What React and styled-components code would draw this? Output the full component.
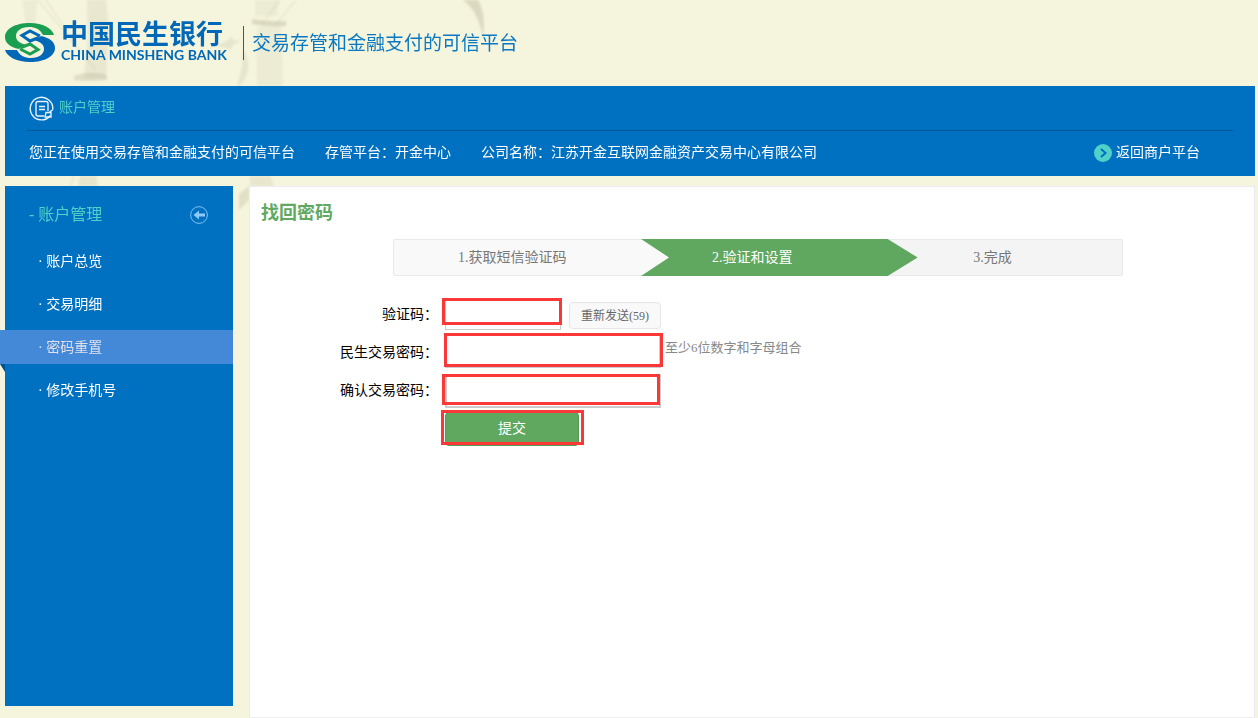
import React, { useState } from "react";
import styled, { createGlobalStyle } from "styled-components";

const GlobalStyle = createGlobalStyle`
  * {
    box-sizing: border-box;
  }
  body {
    margin: 0;
    background-color: #f5f4dc;
    color: #000;
    font-family: "Liberation Serif", "Noto Sans CJK SC", sans-serif;
    font-size: 14px;
  }
  button,
  input {
    font-family: inherit;
  }
  a {
    color: inherit;
    text-decoration: none;
  }
`;

const Page = styled.div`
  position: relative;
  padding: 0 3px 0 5px;
`;

const Bamboo = styled.svg`
  position: absolute;
  top: 0;
  left: 0;
  z-index: -1;
  g {
    filter: blur(1px);
  }
`;

const Header = styled.header`
  display: flex;
  align-items: center;
  height: 86px;
`;

const Brand = styled.a`
  display: flex;
  align-items: center;
  gap: 6px;
  color: #0068b7;
  svg {
    display: block;
  }
`;

const BrandName = styled.span`
  display: flex;
  flex-direction: column;
  width: 170px;
  white-space: nowrap;
  strong {
    font: 700 27px/24px "Noto Sans CJK SC", sans-serif;
  }
  span {
    font: 700 14px/20px Lato, sans-serif;
  }
`;

const Slogan = styled.p`
  margin: 0 0 0 12px;
  padding: 0 0 2px 8px;
  border-left: 1px solid #0068b7;
  color: #0b78c2;
  font: 400 19px/32px "Noto Sans CJK SC", sans-serif;
`;

const Banner = styled.section`
  height: 90px;
  padding: 0 22px;
  background-color: #0070c1;
  color: #fff;
`;

const BannerTitle = styled.h1`
  display: flex;
  align-items: center;
  gap: 5px;
  height: 45px;
  margin: 0;
  padding-left: 2px;
  border-bottom: 1px solid #00559a;
  color: #4fd0c8;
  font-size: 14px;
  font-weight: 400;
  span {
    padding-bottom: 4px;
  }
`;

const BannerInfo = styled.div`
  display: flex;
  align-items: center;
  gap: 30px;
  height: 44px;
  padding: 0 33px 0 2px;
  a {
    display: flex;
    align-items: center;
    gap: 4px;
    margin-left: auto;
  }
  span {
    padding-bottom: 4px;
  }
`;

const Body = styled.div`
  display: flex;
  align-items: flex-start;
  gap: 16px;
  margin-top: 10px;
`;

const Sidebar = styled.nav`
  flex: 0 0 228px;
  min-height: 520px;
  background-color: #0070c1;
  color: #fff;
`;

const SidebarHead = styled.div`
  display: flex;
  align-items: center;
  justify-content: space-between;
  height: 58px;
  padding: 0 25px 0 24px;
  color: #4fd0c8;
  font-size: 16px;
  span {
    padding-bottom: 4px;
  }
  button {
    width: 18px;
    height: 18px;
    padding: 0;
    border: 0;
    background: none;
    cursor: pointer;
  }
  svg {
    display: block;
  }
`;

const Menu = styled.ul`
  display: flex;
  flex-direction: column;
  gap: 9px;
  margin: 0;
  padding: 0;
  list-style: none;
`;

const MenuItem = styled.li`
  position: relative;
  margin-left: -5px;
  background-color: ${(props) => (props.$active ? "#4489d8" : "transparent")};
  color: ${(props) => (props.$active ? "#dfe0ea" : "#fff")};
  line-height: 32px;
  a {
    display: block;
    padding: 2px 0 0 38px;
  }
  &::after {
    content: "";
    display: ${(props) => (props.$active ? "block" : "none")};
    position: absolute;
    top: 100%;
    left: 0;
    border-top: 8px solid #00508c;
    border-left: 5px solid transparent;
  }
`;

const Main = styled.main`
  flex: 1;
  min-height: 532px;
  padding: 12px 0 12px 11px;
  border: 1px solid #ebebf0;
  background-color: #fff;
`;

const Title = styled.h2`
  margin: 0;
  color: #60a960;
  font-size: 18px;
  line-height: 28px;
`;

const Steps = styled.ol`
  display: flex;
  max-width: 730px;
  height: 37px;
  margin: 12px auto 22px;
  padding: 0;
  border: 1px solid #e9e9e9;
  border-radius: 2px;
  background: linear-gradient(90deg, #f9f9f9 50%, #f4f4f4 50%);
  list-style: none;
`;

const Step = styled.li`
  width: ${(props) => props.$width};
  padding-right: ${(props) => props.$inset};
  color: #777;
  line-height: 36px;
  text-align: center;
`;

const CurrentStep = styled(Step)`
  margin: -1px 0;
  background-color: #60a860;
  color: #fff;
  line-height: 38px;
  clip-path: polygon(
    0 0,
    calc(100% - 30px) 0,
    100% 50%,
    calc(100% - 30px) 100%,
    0 100%,
    28px 50%
  );
`;

const Form = styled.form`
  display: flex;
  flex-direction: column;
  gap: 4px;
`;

const Row = styled.div`
  display: flex;
  align-items: flex-start;
  min-height: 34px;
  label {
    width: 177px;
    margin-right: 7px;
    line-height: 34px;
    text-align: right;
  }
`;

const Marked = styled.div`
  position: relative;
  margin-left: ${(props) => (props.$indent ? "184px" : "0")};
  &::after {
    content: "";
    position: absolute;
    inset: ${(props) => props.$inset};
    border: 3px solid #fb3838;
    pointer-events: none;
  }
`;

const Input = styled.input`
  display: block;
  width: ${(props) => props.$width};
  height: ${(props) => props.$height || "32px"};
  padding: 4px 8px;
  border: solid #ccc;
  border-width: ${(props) => (props.$thin ? "0 1px 1px" : "0 2px 2px")};
  background-color: #fff;
  font-size: 14px;
  outline: none;
`;

const ResendButton = styled.button`
  height: 27px;
  margin: 4px 0 0 8px;
  padding: 0 11px 2px;
  border: 1px solid #e6e6e6;
  border-radius: 4px;
  background-color: #f9f9f9;
  color: #666;
  font-size: 12px;
`;

const Hint = styled.span`
  margin-left: 4px;
  color: #888;
  font-size: 13px;
  line-height: 24px;
`;

const SubmitButton = styled.button`
  display: block;
  width: 134px;
  height: 34px;
  padding: 0 0 4px;
  border: 1px solid #559c56;
  border-radius: 4px;
  background-color: #60a860;
  color: #fff;
  font-size: 14px;
  cursor: pointer;
`;

const menus = ["账户总览", "交易明细", "密码重置", "修改手机号"];

const App = () => {
  const [active, setActive] = useState("密码重置");
  const [code, setCode] = useState("");
  const [password, setPassword] = useState("");
  const [confirm, setConfirm] = useState("");

  return (
    <>
      <GlobalStyle />
      <Page>
        <Bamboo width="500" height="260" viewBox="0 0 500 260" aria-hidden="true">
          <g fill="#8c8c6e">
            <path opacity=".08" d="M22 0h15l-2 24H26z" />
            <path opacity=".11" d="M87 0h19l3 28-3 50H84l4-40z" />
            <path opacity=".2" d="M74 76q16-6 33-1v5q-16 2-33 0z" />
            <path opacity=".08" d="M256 0h23l-2 16h-22zM257 27h24l2 59h-26z" />
            <path opacity=".24" d="M252 19q15 3 34 2v5q-17 2-34-2z" />
            <path opacity=".24" d="M463 0q16 12 20 38 3-25-5-38z" />
            <path opacity=".14" d="M243 50q8 12 4 24-4 10-10 12 6-18 6-36z" />
            <path opacity=".14" d="M212 46q14-2 20-10-2 6 10 4-10 4-12 10-6-4-18-4z" />
            <path opacity=".12" d="M80 176h16l2 10H78zM250 176h20l4 10h-24z" />
            <path opacity=".18" d="M239 194l10-8v14l-10 10z" />
          </g>
          <g stroke="#8c8c6e" opacity=".2" fill="none">
            <path d="M38 0l58 70M46 0l28 42M262 24L280 0M276 24L296 0M70 186l4-10" />
          </g>
        </Bamboo>

        <Header>
          <Brand href="#">
            <svg width="50" height="40" viewBox="0 0 50 40" role="img" aria-label="中国民生银行">
              <path
                fill="#1a9f52"
                d="M49 12H38C35 6 30 4 24 4 16 4 11 8 11 13c0 5 4 7 9 8.500L14 26C5 24 0 20 0 14 0 6 10 0 25 0c13 0 22 5 24 12z"
              />
              <path
                fill="#0068b7"
                d="M0 27h12c3 6 8 8 14 8 8 0 13-4 13-9 0-5-4-7-9-8.500L36 13c9 2 14 6 14 12 0 8-10 14-25 14C12 39 2 34 0 27z"
              />
              <path fill="none" stroke="#1a9f52" strokeWidth="3" d="M16 24.500l9-3.500 8 5.500-8 4.500-10-5" />
              <path fill="none" stroke="#0068b7" strokeWidth="3" d="M34 14.500L25 18l-8-5.500L25 8l10 5" />
            </svg>
            <BrandName>
              <strong>中国民生银行</strong>
              <span>CHINA MINSHENG BANK</span>
            </BrandName>
          </Brand>
          <Slogan>交易存管和金融支付的可信平台</Slogan>
        </Header>

        <Banner>
          <BannerTitle>
            <svg width="25" height="25" viewBox="0 0 25 25" fill="none" stroke="#e6f3fb" strokeWidth="1.4">
              <path d="M21.500 19.500A11.300 11.300 0 1 1 23.800 13.500" />
              <path d="M15 20H9a2 2 0 0 1-2-2V7.500a2 2 0 0 1 2-2h8a2 2 0 0 1 2 2V15M10 10.500h6M10 13.500h6" />
              <path d="M16 21h6v-4.500h-5zM20 16.500l4-3" />
            </svg>
            <span>账户管理</span>
          </BannerTitle>
          <BannerInfo>
            <span>您正在使用交易存管和金融支付的可信平台</span>
            <span>存管平台：开金中心</span>
            <span>公司名称：江苏开金互联网金融资产交易中心有限公司</span>
            <a href="#">
              <svg width="18" height="18" viewBox="0 0 18 18">
                <circle cx="9" cy="9" r="9" fill="#4fd0c8" />
                <path d="M7 5l4.500 4L7 13" fill="none" stroke="#0070c1" strokeWidth="2" />
              </svg>
              <span>返回商户平台</span>
            </a>
          </BannerInfo>
        </Banner>

        <Body>
          <Sidebar>
            <SidebarHead>
              <span>- 账户管理</span>
              <button type="button" aria-label="收起">
                <svg width="18" height="18" viewBox="0 0 18 18">
                  <circle cx="9" cy="9" r="8.400" fill="none" stroke="#7fc0f5" />
                  <path d="M3.500 9L9 4.500v3h6v3H9v3z" fill="#8cc8fa" />
                </svg>
              </button>
            </SidebarHead>
            <Menu>
              {menus.map((item) => (
                <MenuItem key={item} $active={item === active}>
                  <a href="#" onClick={() => setActive(item)}>
                    · {item}
                  </a>
                </MenuItem>
              ))}
            </Menu>
          </Sidebar>

          <Main>
            <Title>找回密码</Title>
            <Steps>
              <Step $width="34%" $inset="10px">1.获取短信验证码</Step>
              <CurrentStep $width="38%" $inset="54px">2.验证和设置</CurrentStep>
              <Step $width="28%" $inset="54px">3.完成</Step>
            </Steps>

            <Form onSubmit={(e) => e.preventDefault()}>
              <Row>
                <label htmlFor="code">验证码：</label>
                <Marked $inset="0 -1px 5px -3px">
                  <Input
                    id="code"
                    $width="116px"
                    $thin
                    value={code}
                    onChange={(e) => setCode(e.target.value)}
                  />
                </Marked>
                <ResendButton type="button">重新发送(59)</ResendButton>
              </Row>
              <Row>
                <label htmlFor="password">民生交易密码：</label>
                <Marked $inset="-3px -2px 1px -1px">
                  <Input
                    id="password"
                    type="password"
                    $width="216px"
                    value={password}
                    onChange={(e) => setPassword(e.target.value)}
                  />
                </Marked>
                <Hint>至少6位数字和字母组合</Hint>
              </Row>
              <Row>
                <label htmlFor="confirm">确认交易密码：</label>
                <Marked $inset="0 1px 3px -3px">
                  <Input
                    id="confirm"
                    type="password"
                    $width="216px"
                    $height="34px"
                    value={confirm}
                    onChange={(e) => setConfirm(e.target.value)}
                  />
                </Marked>
              </Row>
              <Row>
                <Marked $indent $inset="-2px -5px 1px -4px">
                  <SubmitButton type="submit">提交</SubmitButton>
                </Marked>
              </Row>
            </Form>
          </Main>
        </Body>
      </Page>
    </>
  );
};

export default App;
